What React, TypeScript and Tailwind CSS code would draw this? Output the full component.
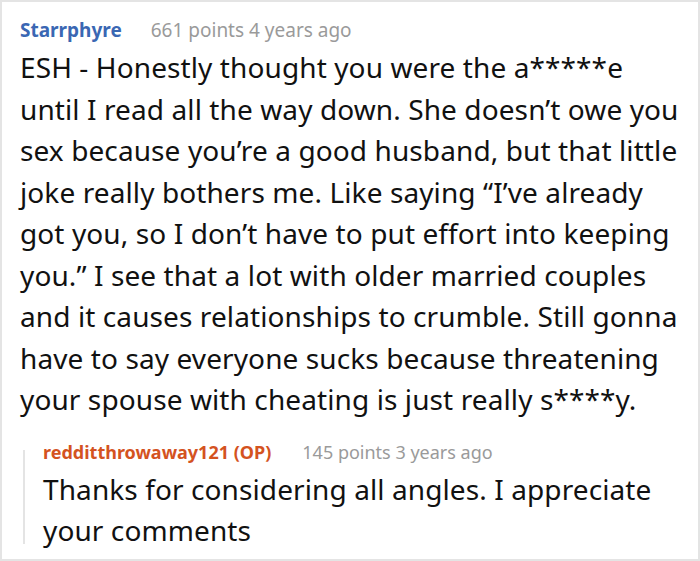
import React from "react";

export default function App() {
  return (
    <div className="w-[700px] h-[561px] bg-white border-2 border-[#e4e4e4] overflow-hidden" style={{ fontFamily: '"Noto Sans", "Open Sans", sans-serif' }}>
      <div className="pl-[18px] pr-[16px] pt-[14px]">
        <div className="flex items-baseline gap-[29px] text-[19px] leading-[28px]">
          <span className="font-bold text-[#3a67b3]">Starrphyre</span>
          <span className="text-[#9a9a9a]">661 points 4 years ago</span>
        </div>
        <p className="text-[28px] leading-[41.5px] tracking-[0.1px] text-[#111] mt-[3px]">
          ESH - Honestly thought you were the a*****e until I read all the way down. She doesn’t owe you sex because you’re a good husband, but that little joke really bothers me. Like saying “I’ve already got you, so I don’t have to put effort into keeping you.” I see that a lot with older married couples and it causes relationships to crumble. Still gonna have to say everyone sucks because threatening your spouse with cheating is just really s****y.
        </p>
        <div className="mt-[17px] ml-[3px] flex">
          <div className="w-[2px] bg-[#e4e4e4] mt-[12px] mb-[8px] shrink-0" />
          <div className="pl-[18px]">
            <div className="flex items-baseline gap-[31px] text-[18px] leading-[28px]">
              <span className="font-bold text-[#d4531f]">redditthrowaway121 (OP)</span>
              <span className="text-[#9a9a9a]">145 points 3 years ago</span>
            </div>
            <p className="text-[28px] leading-[41.5px] tracking-[0.1px] text-[#111] mt-[3px]">
              Thanks for considering all angles. I appreciate your comments
            </p>
          </div>
        </div>
      </div>
    </div>
  );
}
